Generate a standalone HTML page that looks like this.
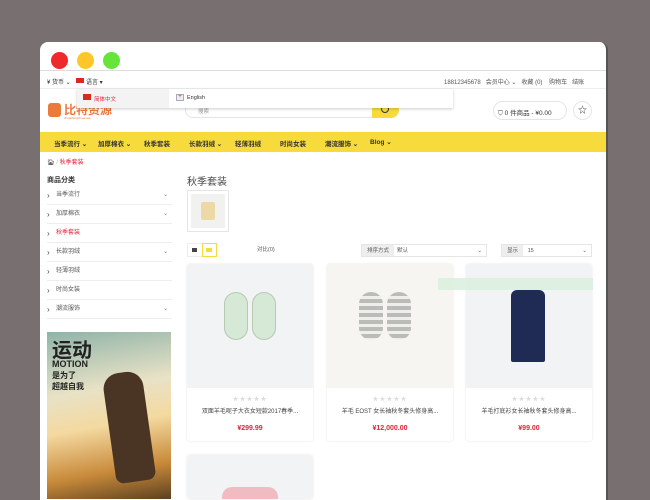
<!DOCTYPE html>
<html style="height:500px;overflow:hidden"><head><meta charset="utf-8"><style>
*{margin:0;padding:0;box-sizing:border-box}
html,body{width:650px;height:500px;overflow:hidden}
body{background:#786f70;position:relative;font-family:"Liberation Sans","Noto Sans CJK SC",sans-serif;color:#333}
.a{position:absolute}
.win{left:40px;top:42px;width:568px;height:458px;background:#fff;border-radius:8px 8px 0 0;border-right:2px solid #555}
.dot{width:17px;height:17px;border-radius:50%;top:52px}
.t{font-size:6px;white-space:nowrap}
.nav{left:40px;top:132px;width:566px;height:20px;background:#f7db3d}
.nav span{position:absolute;top:6px;font-size:6.5px;font-weight:bold;color:#333}
.item{position:absolute;left:47px;width:125px;height:19px;border-bottom:1px solid #eee;font-size:6px;color:#555;line-height:19px;padding-left:9px}
.item:before{content:"›";position:absolute;left:0;color:#444;font-size:8px}
.item i{position:absolute;right:4px;font-style:normal;color:#888;font-size:6px}
.card{width:126px;height:177px;border-radius:3px;box-shadow:0 0 2px rgba(0,0,0,.12);background:#fff;overflow:hidden}
.card .img{height:124px}
.card .st{position:absolute;top:130px;width:100%;text-align:center;color:#ddd;font-size:6px;letter-spacing:1px}
.card .nm{position:absolute;top:142px;width:100%;text-align:center;font-size:6px;color:#444}
.card .pr{position:absolute;top:161px;width:100%;text-align:center;font-size:7px;font-weight:bold;color:#e0243b}
.sel{height:13px;border:1px solid #e5e5e5;font-size:5.5px;color:#555;line-height:12px}
.sel b{display:inline-block;background:#eee;padding:0 5px;font-weight:normal;height:11px}
</style></head><body>
<div class="a win"></div>
<div class="a dot" style="left:51px;background:#ee2a2a"></div>
<div class="a dot" style="left:77px;background:#fdc72c"></div>
<div class="a dot" style="left:103px;background:#65e43a"></div>
<div class="a" style="left:40px;top:70px;width:566px;height:1px;background:#ddd"></div>
<div class="a t" style="left:47px;top:77px">¥ 货币 ⌄</div>
<div class="a" style="left:76px;top:78px;width:8px;height:5px;background:#d52b1e"></div>
<div class="a t" style="left:86px;top:77px">语言 ▾</div>
<div class="a t" style="left:444px;top:77px;color:#555">18812345678 &nbsp; 会员中心 ⌄ &nbsp; 收藏 (0) &nbsp;&nbsp; 购物车 &nbsp; 结账</div>
<div class="a" style="left:40px;top:88px;width:566px;height:1px;background:#eee"></div>
<div class="a" style="left:48px;top:103px;width:13px;height:14px;background:#ec7a3a;border-radius:3px"></div>
<div class="a" style="left:64px;top:101px;font-size:12px;font-weight:bold;color:#ec7a3a">比特资源</div>
<div class="a" style="left:64px;top:116px;font-size:3px;color:#ec7a3a">zhuanfengzhuansen</div>
<div class="a" style="left:185px;top:102px;width:213px;height:16px;border:1px solid #e5e5e5;border-radius:8px;background:#fff"></div>
<div class="a t" style="left:198px;top:107px;color:#999;font-size:5.5px">搜索</div>
<div class="a" style="left:372px;top:102px;width:27px;height:16px;background:#f7db3d;border-radius:0 8px 8px 0"></div>
<div class="a" style="left:381px;top:105px;width:8px;height:8px;border:1.5px solid #333;border-radius:50%"></div>
<div class="a" style="left:493px;top:101px;width:74px;height:19px;border:1px solid #e5e5e5;border-radius:10px"></div>
<div class="a t" style="left:498px;top:107px;font-size:6.5px">⛉ 0 件商品 - ¥0.00</div>
<div class="a" style="left:573px;top:101px;width:19px;height:19px;border:1px solid #e5e5e5;border-radius:50%;font-size:9px;text-align:center;line-height:17px">☆</div>
<div class="a" style="left:77px;top:89px;width:376px;height:19px;background:#fff;box-shadow:0 1px 3px rgba(0,0,0,.2)"></div>
<div class="a" style="left:77px;top:89px;width:92px;height:19px;background:#f3f3f3"></div>
<div class="a" style="left:83px;top:94px;width:8px;height:6px;background:#d52b1e"></div>
<div class="a t" style="left:94px;top:95px;color:#e0243b;font-size:5.5px">简体中文</div>
<div class="a" style="left:176px;top:94px;width:8px;height:7px;background:#eee;border:1px solid #aab;color:#d52b1e;font-size:6px;line-height:5px;text-align:center">+</div>
<div class="a t" style="left:187px;top:95px;font-size:5.5px">English</div>
<div class="a nav">
<span style="left:14px">当季流行 ⌄</span><span style="left:58px">加厚棉衣 ⌄</span><span style="left:104px">秋季套装</span><span style="left:149px">长款羽绒 ⌄</span><span style="left:195px">轻薄羽绒</span><span style="left:240px">时尚女装</span><span style="left:285px">潮流服饰 ⌄</span><span style="left:330px">Blog ⌄</span>
</div>
<div class="a t" style="left:47px;top:157px">🏠︎ <span style="color:#bbb">/</span> <span style="color:#e0243b">秋季套装</span></div>
<div class="a" style="left:47px;top:175px;font-size:7px;font-weight:bold">商品分类</div>
<div class="item" style="top:186px">当季流行<i>⌄</i></div>
<div class="item" style="top:205px">加厚棉衣<i>⌄</i></div>
<div class="item" style="top:224px;color:#e0243b">秋季套装</div>
<div class="item" style="top:243px">长款羽绒<i>⌄</i></div>
<div class="item" style="top:262px">轻薄羽绒</div>
<div class="item" style="top:281px">时尚女装</div>
<div class="item" style="top:300px">潮流服饰<i>⌄</i></div>
<div class="a" style="left:47px;top:332px;width:124px;height:167px;background:linear-gradient(170deg,#8fb3a8 0%,#e8e2c6 35%,#f4d9a0 55%,#c88a3a 80%,#5c4020 100%);overflow:hidden">
<div class="a" style="left:62px;top:40px;width:40px;height:110px;background:#4a3524;border-radius:16px 16px 8px 8px;transform:rotate(-8deg)"></div>
<div class="a" style="left:5px;top:2px;font-size:20px;font-weight:bold;color:#222">运动</div>
<div class="a" style="left:5px;top:27px;font-size:9px;font-weight:bold;color:#222">MOTION</div>
<div class="a" style="left:5px;top:38px;font-size:8px;font-weight:bold;color:#222">是为了</div>
<div class="a" style="left:5px;top:49px;font-size:8px;font-weight:bold;color:#222">超越自我</div>
</div>
<div class="a" style="left:187px;top:173px;font-size:10px;color:#444">秋季套装</div>
<div class="a" style="left:187px;top:190px;width:42px;height:42px;border:1px solid #e5e5e5;padding:3px"><div style="width:100%;height:100%;background:#f1f1f0;position:relative"><div class="a" style="left:10px;top:8px;width:14px;height:18px;background:#ecd9a6;border-radius:2px"></div></div></div>
<div class="a" style="left:187px;top:243px;width:30px;height:14px;border:1px solid #eee"></div>
<div class="a" style="left:202px;top:243px;width:15px;height:14px;border:1px solid #f7db3d"></div>
<div class="a" style="left:192px;top:248px;width:5px;height:4px;background:#444"></div>
<div class="a" style="left:206px;top:248px;width:6px;height:4px;background:#f7db3d"></div>
<div class="a t" style="left:257px;top:245px;color:#555;font-size:5.5px">对比(0)</div>
<div class="a sel" style="left:361px;top:244px;width:126px"><b>排序方式</b> &nbsp;默认<span style="position:absolute;right:4px">⌄</span></div>
<div class="a sel" style="left:501px;top:244px;width:91px"><b>显示</b> &nbsp;&nbsp;15<span style="position:absolute;right:4px">⌄</span></div>
<div class="a card" style="left:187px;top:264px"><div class="img" style="background:#f2f3f5;position:relative">
<div class="a" style="left:37px;top:28px;width:24px;height:48px;background:#d6e8d6;border-radius:12px;border:1px solid #b7c9b0"></div>
<div class="a" style="left:65px;top:28px;width:24px;height:48px;background:#d6e8d6;border-radius:12px;border:1px solid #b7c9b0"></div></div>
<div class="st">★★★★★</div><div class="nm">双面羊毛呢子大衣女短款2017春季...</div><div class="pr">¥299.99</div></div>
<div class="a card" style="left:327px;top:264px"><div class="img" style="background:#f6f5f1;position:relative">
<div class="a" style="left:32px;top:28px;width:24px;height:48px;background:repeating-linear-gradient(#bcbcb6 0 4px,#eee 4px 7px);border-radius:12px"></div>
<div class="a" style="left:60px;top:28px;width:24px;height:48px;background:repeating-linear-gradient(#bcbcb6 0 4px,#eee 4px 7px);border-radius:12px"></div></div>
<div class="st">★★★★★</div><div class="nm">羊毛 EOST 女长袖秋冬套头修身高...</div><div class="pr">¥12,000.00</div></div>
<div class="a card" style="left:466px;top:264px"><div class="img" style="background:#f2f3f5;position:relative">
<div class="a" style="left:45px;top:26px;width:34px;height:72px;background:#1f2a55;border-radius:6px 6px 2px 2px"></div></div>
<div class="st">★★★★★</div><div class="nm">羊毛打底衫女长袖秋冬套头修身高...</div><div class="pr">¥99.00</div></div>
<div class="a" style="left:438px;top:278px;width:155px;height:12px;background:#d9eedd;opacity:.85"></div>
<div class="a card" style="left:187px;top:455px;height:44px"><div class="img" style="background:#f2f3f5;position:relative;height:44px">
<div class="a" style="left:35px;top:32px;width:56px;height:12px;background:#f0bcc2;border-radius:10px 10px 0 0"></div></div></div>
</body></html>
